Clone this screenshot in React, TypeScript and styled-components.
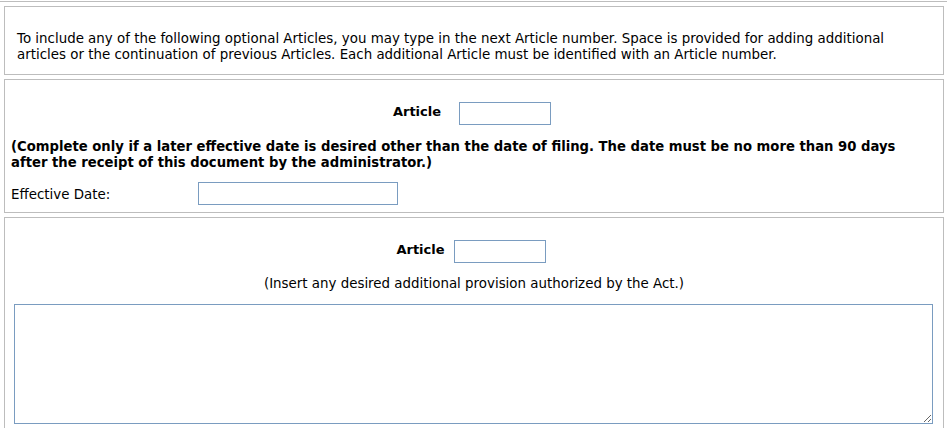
import React from "react";
import styled, { createGlobalStyle } from "styled-components";

const GlobalStyle = createGlobalStyle`
  html, body {
    margin: 0;
    padding: 0;
    background: #ffffff;
  }
  body {
    font-family: "DejaVu Sans", Verdana, sans-serif;
    font-size: 13.4px;
    color: #000;
  }
`;

const Page = styled.div`
  display: flex;
  flex-direction: column;
  gap: 4px;
  padding: 0 3px 0 4px;
`;

/* the tail of the box that sits above the visible area */
const PrevBox = styled.div`
  height: 0;
  margin: 0 -3px 0 -4px;
  border-top: 1px solid #fff;
  border-bottom: 1px solid #bdbdbd;
`;

const Box = styled.section<{ $pad: string }>`
  border: 1px solid #bdbdbd;
  padding: ${(p) => p.$pad};
  display: flex;
  flex-direction: column;
`;

const Intro = styled.p`
  margin: 0;
  line-height: 16px;
`;

const ArticleRow = styled.div<{ $gap: number; $shift: number }>`
  display: flex;
  justify-content: center;
  align-items: center;
  gap: ${(p) => p.$gap}px;
  padding-right: ${(p) => p.$shift}px;
`;

const Bold = styled.span`
  font-weight: bold;
  font-size: 13px;
  padding-bottom: 4px;
`;

const TextInput = styled.input<{ $w: number }>`
  box-sizing: border-box;
  width: ${(p) => p.$w}px;
  height: 23px;
  border: 1px solid #7a9cc0;
  border-radius: 0;
  padding: 2px 4px;
  margin: 0;
  font: inherit;
  background: #fff;
  outline: none;
`;

const Note = styled.p`
  margin: 14px 30px 0 0;
  font-weight: bold;
  font-size: 13.2px;
  line-height: 16px;
`;

const FieldRow = styled.div`
  display: flex;
  align-items: center;
  margin-top: 11px;
`;

const FieldLabel = styled.label`
  width: 187px;
  padding-top: 1px;
`;

const Centered = styled.p`
  margin: 13px 0 0;
  text-align: center;
  line-height: 16px;
`;

const Area = styled.textarea`
  box-sizing: border-box;
  display: block;
  width: 919px;
  height: 120px;
  margin: 12px 0 0 9px;
  border: 1px solid #7a9cc0;
  border-radius: 0;
  font: inherit;
  outline: none;
  resize: both;
`;

export default function App() {
  return (
    <>
      <GlobalStyle />
      <Page>
        <PrevBox />
        <Box $pad="24px 12px 11px">
          <Intro>
            To include any of the following optional Articles, you may type in the next Article
            number. Space is provided for adding additional articles or the continuation of
            previous Articles. Each additional Article must be identified with an Article number.
          </Intro>
        </Box>
        <Box $pad="22px 6px 7px">
          <ArticleRow $gap={18} $shift={4}>
            <Bold>Article</Bold>
            <TextInput $w={92} />
          </ArticleRow>
          <Note>
            (Complete only if a later effective date is desired other than the date of filing. The
            date must be no more than 90 days after the receipt of this document by the
            administrator.)
          </Note>
          <FieldRow>
            <FieldLabel>Effective Date:</FieldLabel>
            <TextInput $w={200} />
          </FieldRow>
        </Box>
        <Box $pad="22px 0 10px">
          <ArticleRow $gap={9} $shift={6}>
            <Bold>Article</Bold>
            <TextInput $w={92} />
          </ArticleRow>
          <Centered>(Insert any desired additional provision authorized by the Act.)</Centered>
          <Area />
        </Box>
      </Page>
    </>
  );
}
